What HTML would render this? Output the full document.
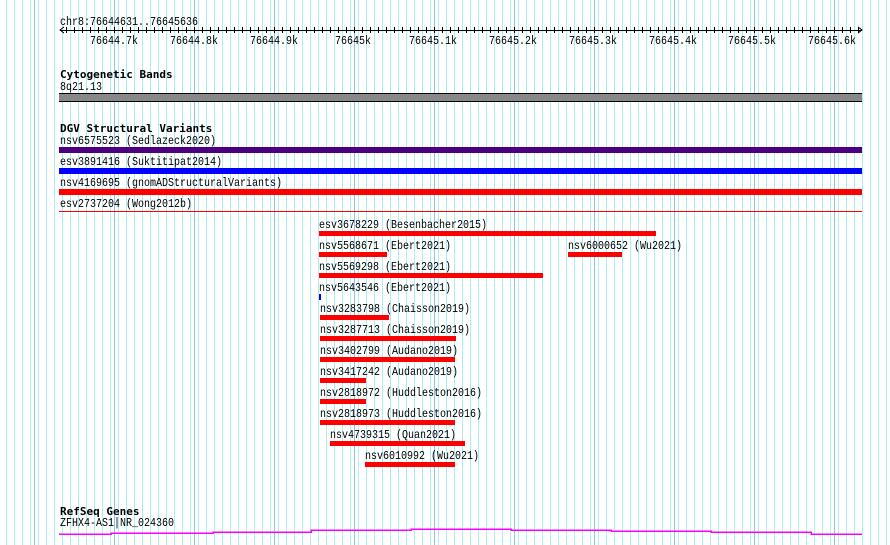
<!DOCTYPE html>
<html><head><style>
body{margin:0;width:890px;height:545px;overflow:hidden;background:#fff;position:relative;font-family:"Liberation Mono","DejaVu Sans Mono",monospace;font-size:10px;color:#000}
.t{position:absolute;white-space:nowrap;line-height:10px;transform:translateY(2px) scale(1,1.2);transform-origin:0 0}
.b{position:absolute;height:5px;background:#f00}
.h{font-weight:bold;font-size:11px;font-family:"DejaVu Sans Mono","Liberation Mono",monospace;transform:translateY(2px)}
</style></head><body>
<svg width="890" height="545" style="position:absolute;left:0;top:0" shape-rendering="crispEdges">
<defs>
<pattern id="g" x="54" y="0" width="8" height="545" patternUnits="userSpaceOnUse">
<rect x="0" y="0" width="1" height="545" fill="#aeeef0"/></pattern>
<pattern id="G" x="114" y="0" width="80" height="545" patternUnits="userSpaceOnUse">
<rect x="0" y="0" width="1" height="545" fill="#88c8ec"/></pattern>
<pattern id="tk" x="58" y="0" width="8" height="40" patternUnits="userSpaceOnUse">
<rect x="0" y="27" width="1" height="6" fill="#000"/></pattern>
</defs>
<rect x="0" y="0" width="890" height="545" fill="url(#g)"/>
<rect x="0" y="0" width="890" height="545" fill="url(#G)"/>
<rect x="60" y="30" width="802" height="1" fill="#000"/>
<rect x="62" y="0" width="800" height="40" fill="url(#tk)"/>
<polyline points="64,27 60,30 64,33" fill="none" stroke="#000"/>
<polyline points="858,27 862,30 858,33" fill="none" stroke="#000"/>
<rect x="59" y="93" width="803" height="9" fill="#000"/>
<rect x="59" y="94" width="803" height="7" fill="#888"/>
<polyline points="59,534 111,534 111,533 213,533 213,532 311,532 311,530 411,530 411,529 511,529 511,530 611,530 611,531 711,531 711,532 811,532 811,534 862,534" fill="none" stroke="#f0f" stroke-width="1.5"/>
</svg>
<div class="t" style="left:60px;top:16px">chr8:76644631..76645636</div>
<div class="t" style="left:90px;top:35px">76644.7k</div>
<div class="t" style="left:170px;top:35px">76644.8k</div>
<div class="t" style="left:250px;top:35px">76644.9k</div>
<div class="t" style="left:335px;top:35px">76645k</div>
<div class="t" style="left:409px;top:35px">76645.1k</div>
<div class="t" style="left:489px;top:35px">76645.2k</div>
<div class="t" style="left:569px;top:35px">76645.3k</div>
<div class="t" style="left:649px;top:35px">76645.4k</div>
<div class="t" style="left:728px;top:35px">76645.5k</div>
<div class="t" style="left:808px;top:35px">76645.6k</div>
<div class="t h" style="left:60px;top:68px">Cytogenetic Bands</div>
<div class="t" style="left:60px;top:81px">8q21.13</div>
<div class="t h" style="left:60px;top:122px">DGV Structural Variants</div>
<div class="t" style="left:60px;top:135px">nsv6575523 (Sedlazeck2020)</div>
<div class="b" style="left:59px;width:803px;top:147px;height:6px;background:#4b0082"></div>
<div class="t" style="left:60px;top:156px">esv3891416 (Suktitipat2014)</div>
<div class="b" style="left:59px;width:803px;top:168px;height:6px;background:#00f"></div>
<div class="t" style="left:60px;top:177px">nsv4169695 (gnomADStructuralVariants)</div>
<div class="b" style="left:59px;width:803px;top:189px;height:6px"></div>
<div class="t" style="left:60px;top:198px">esv2737204 (Wong2012b)</div>
<div class="b" style="left:59px;width:803px;top:211px;height:1px"></div>

<div class="t" style="left:319px;top:219px">esv3678229 (Besenbacher2015)</div>
<div class="b" style="left:319px;width:337px;top:231px"></div>
<div class="t" style="left:319px;top:240px">nsv5568671 (Ebert2021)</div>
<div class="b" style="left:319px;width:68px;top:252px"></div>
<div class="t" style="left:568px;top:240px">nsv6000652 (Wu2021)</div>
<div class="b" style="left:568px;width:54px;top:252px"></div>
<div class="t" style="left:319px;top:261px">nsv5569298 (Ebert2021)</div>
<div class="b" style="left:319px;width:224px;top:273px"></div>
<div class="t" style="left:319px;top:282px">nsv5643546 (Ebert2021)</div>
<div class="b" style="left:319px;width:2px;top:294px;height:6px;background:#00f"></div>
<div class="t" style="left:320px;top:303px">nsv3283798 (Chaisson2019)</div>
<div class="b" style="left:320px;width:69px;top:315px"></div>
<div class="t" style="left:320px;top:324px">nsv3287713 (Chaisson2019)</div>
<div class="b" style="left:320px;width:136px;top:336px"></div>
<div class="t" style="left:320px;top:345px">nsv3402799 (Audano2019)</div>
<div class="b" style="left:320px;width:135px;top:357px"></div>
<div class="t" style="left:320px;top:366px">nsv3417242 (Audano2019)</div>
<div class="b" style="left:320px;width:46px;top:378px"></div>
<div class="t" style="left:320px;top:387px">nsv2818972 (Huddleston2016)</div>
<div class="b" style="left:320px;width:46px;top:399px"></div>
<div class="t" style="left:320px;top:408px">nsv2818973 (Huddleston2016)</div>
<div class="b" style="left:320px;width:135px;top:420px"></div>
<div class="t" style="left:330px;top:429px">nsv4739315 (Quan2021)</div>
<div class="b" style="left:330px;width:135px;top:441px"></div>
<div class="t" style="left:365px;top:450px">nsv6010992 (Wu2021)</div>
<div class="b" style="left:365px;width:90px;top:462px"></div>

<div class="t h" style="left:60px;top:505px">RefSeq Genes</div>
<div class="t" style="left:60px;top:517px">ZFHX4-AS1|NR_024360</div>
</body></html>
